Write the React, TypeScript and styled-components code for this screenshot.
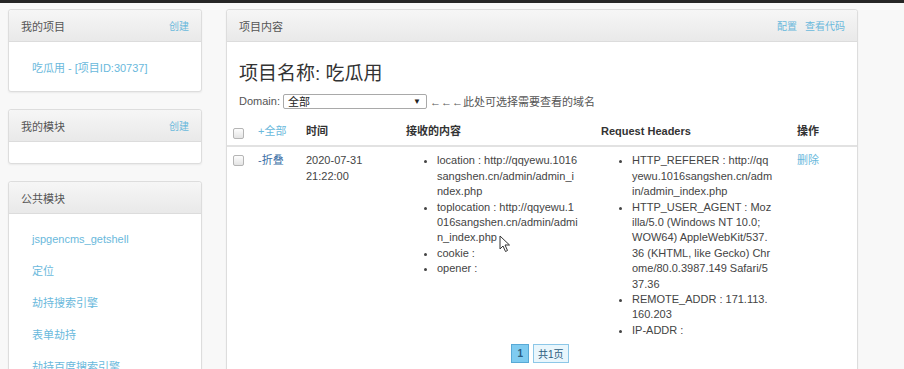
import React from 'react';
import styled, { createGlobalStyle } from 'styled-components';

const GlobalStyle = createGlobalStyle`
  html, body {
    margin: 0;
    padding: 0;
    background: #f8f8f8;
    font-family: "Liberation Sans", Arial, "Noto Sans CJK SC", sans-serif;
    font-size: 11px;
    color: #444;
  }
`;

const TopBar = styled.div`
  height: 3px;
  background: #262626;
`;

const Page = styled.div`
  display: flex;
  align-items: flex-start;
  gap: 24px;
  padding: 6px 8px 0;
  height: 366px;
  overflow: hidden;
  box-sizing: border-box;
`;

const Sidebar = styled.div`
  width: 194px;
  display: flex;
  flex-direction: column;
  gap: 17px;
  flex-shrink: 0;
`;

const Panel = styled.div`
  background: #fff;
  border: 1px solid #ddd;
  border-radius: 3px;
  box-shadow: 0 1px 2px rgba(0, 0, 0, 0.06);
  flex-shrink: 0;
`;

const PanelHeader = styled.div`
  height: 31px;
  display: flex;
  align-items: center;
  justify-content: space-between;
  padding: 0 12px;
  background: linear-gradient(#f6f6f6, #e9e9e9);
  border-bottom: 1px solid #dcdcdc;
  border-radius: 3px 3px 0 0;
  color: #555;
  font-size: 11px;
`;

const HeaderLinks = styled.div`
  display: flex;
  gap: 8px;
  font-size: 10px;
`;

const Link = styled.a<{ $dark?: boolean }>`
  color: ${(p) => (p.$dark ? '#3b6fa6' : '#6ab9dc')};
  text-decoration: none;
  cursor: pointer;
`;

const PanelBody = styled.div<{ $pad: string }>`
  padding: ${(p) => p.$pad};
`;

const SideLinks = styled.div`
  display: flex;
  flex-direction: column;
  gap: 16px;
  font-size: 11px;
  line-height: 16px;
`;

const MainPanel = styled(Panel)`
  width: 630px;
  height: 400px;
`;

const Intro = styled.div`
  padding: 21px 12px 0;
`;

const Title = styled.h3`
  margin: 0 0 8px;
  font-size: 19px;
  font-weight: normal;
  line-height: 22px;
  color: #333;
`;

const DomainLine = styled.div`
  display: flex;
  align-items: center;
  gap: 3px;
  height: 16px;
  font-size: 11px;
  color: #555;
`;

const SelectBox = styled.div`
  width: 144px;
  height: 15px;
  box-sizing: border-box;
  border: 1px solid #a9a9a9;
  border-radius: 2px;
  background: #fff;
  display: flex;
  align-items: center;
  justify-content: space-between;
  padding: 0 5px 0 4px;
  color: #222;
  font-size: 11px;

  & > span:last-child {
    font-size: 8px;
    color: #222;
  }
`;

const Table = styled.table`
  width: 100%;
  border-collapse: collapse;
  margin-top: 9px;
  font-size: 11px;
  line-height: 15.4px;
  table-layout: fixed;
`;

const Th = styled.th<{ $w: number }>`
  width: ${(p) => p.$w}px;
  box-sizing: border-box;
  text-align: left;
  font-weight: bold;
  color: #333;
  padding: 6px;
  border-bottom: 2px solid #e2e2e2;
  vertical-align: bottom;
`;

const Td = styled.td`
  padding: 6px;
  vertical-align: top;
  color: #444;
`;

const Check = styled.input.attrs({ type: 'checkbox' })`
  appearance: none;
  width: 11px;
  height: 11px;
  margin: 2px 0 0;
  border: 1px solid #b5b5b5;
  border-radius: 2px;
  background: linear-gradient(#fdfdfd, #e4e4e4);
  display: block;
`;

const InfoList = styled.ul<{ $w: number }>`
  margin: 0;
  padding-left: 31px;
  width: ${(p) => p.$w}px;
  word-break: break-all;
`;

const Pager = styled.div`
  display: flex;
  justify-content: center;
  gap: 4px;
  margin-left: -4px;
`;

const PageBtn = styled.span<{ $active?: boolean }>`
  height: 19px;
  box-sizing: border-box;
  padding: 0 ${(p) => (p.$active ? '5px' : '4px')};
  display: flex;
  align-items: center;
  font-size: 10px;
  font-weight: ${(p) => (p.$active ? 'bold' : 'normal')};
  color: #2b5c80;
  background: ${(p) => (p.$active ? '#7fcbf0' : '#e9f6fc')};
  border: 1px solid ${(p) => (p.$active ? '#58a9d6' : '#8cc7e8')};
`;

const Cursor = styled.svg`
  position: absolute;
  left: 499px;
  top: 235px;
`;

const location = [
  'location : http://qqyewu.1016sangshen.cn/admin/admin_index.php',
  'toplocation : http://qqyewu.1016sangshen.cn/admin/admin_index.php',
  'cookie : ',
  'opener : ',
];

const headers = [
  'HTTP_REFERER : http://qqyewu.1016sangshen.cn/admin/admin_index.php',
  'HTTP_USER_AGENT : Mozilla/5.0 (Windows NT 10.0; WOW64) AppleWebKit/537.36 (KHTML, like Gecko) Chrome/80.0.3987.149 Safari/537.36',
  'REMOTE_ADDR : 171.113.160.203',
  'IP-ADDR : ',
];

const modules = ['jspgencms_getshell', '定位', '劫持搜索引擎', '表单劫持', '劫持百度搜索引擎'];

const App: React.FC = () => (
  <>
    <GlobalStyle />
    <TopBar />
    <Page>
      <Sidebar>
        <Panel>
          <PanelHeader>
            <span>我的项目</span>
            <HeaderLinks>
              <Link>创建</Link>
            </HeaderLinks>
          </PanelHeader>
          <PanelBody $pad="17px 23px 16px">
            <Link>吃瓜用 - [项目ID:30737]</Link>
          </PanelBody>
        </Panel>
        <Panel>
          <PanelHeader>
            <span>我的模块</span>
            <HeaderLinks>
              <Link>创建</Link>
            </HeaderLinks>
          </PanelHeader>
          <PanelBody $pad="21px 0 0" />
        </Panel>
        <Panel>
          <PanelHeader>
            <span>公共模块</span>
          </PanelHeader>
          <PanelBody $pad="17px 23px">
            <SideLinks>
              {modules.map((m) => (
                <Link key={m}>{m}</Link>
              ))}
            </SideLinks>
          </PanelBody>
        </Panel>
      </Sidebar>

      <MainPanel>
        <PanelHeader>
          <span>项目内容</span>
          <HeaderLinks>
            <Link>配置</Link>
            <Link>查看代码</Link>
          </HeaderLinks>
        </PanelHeader>
        <Intro>
          <Title>项目名称: 吃瓜用</Title>
          <DomainLine>
            <span>Domain:</span>
            <SelectBox>
              <span>全部</span>
              <span>▼</span>
            </SelectBox>
            <span>←←←此处可选择需要查看的域名</span>
          </DomainLine>
        </Intro>
        <Table>
          <thead>
            <tr>
              <Th $w={25}>
                <Check />
              </Th>
              <Th $w={48}>
                <Link style={{ fontWeight: 'normal' }}>+全部</Link>
              </Th>
              <Th $w={100}>时间</Th>
              <Th $w={195}>接收的内容</Th>
              <Th $w={196}>Request Headers</Th>
              <Th $w={66}>操作</Th>
            </tr>
          </thead>
          <tbody>
            <tr>
              <Td>
                <Check />
              </Td>
              <Td>
                <Link $dark>-折叠</Link>
              </Td>
              <Td>
                2020-07-31
                <br />
                21:22:00
              </Td>
              <Td>
                <InfoList $w={142}>
                  {location.map((l) => (
                    <li key={l}>{l}</li>
                  ))}
                </InfoList>
              </Td>
              <Td>
                <InfoList $w={141}>
                  {headers.map((h) => (
                    <li key={h}>{h}</li>
                  ))}
                </InfoList>
              </Td>
              <Td>
                <Link>删除</Link>
              </Td>
            </tr>
          </tbody>
        </Table>
        <Pager>
          <PageBtn $active>1</PageBtn>
          <PageBtn>共1页</PageBtn>
        </Pager>
      </MainPanel>
    </Page>
    <Cursor width="12" height="18" viewBox="0 0 12 18">
      <path d="M1 1 L1 14 L4 11 L6.5 16.5 L8.5 15.5 L6 10 L10.5 10 Z" fill="#fff" stroke="#333" strokeWidth="1" strokeLinejoin="round" />
    </Cursor>
  </>
);

export default App;
